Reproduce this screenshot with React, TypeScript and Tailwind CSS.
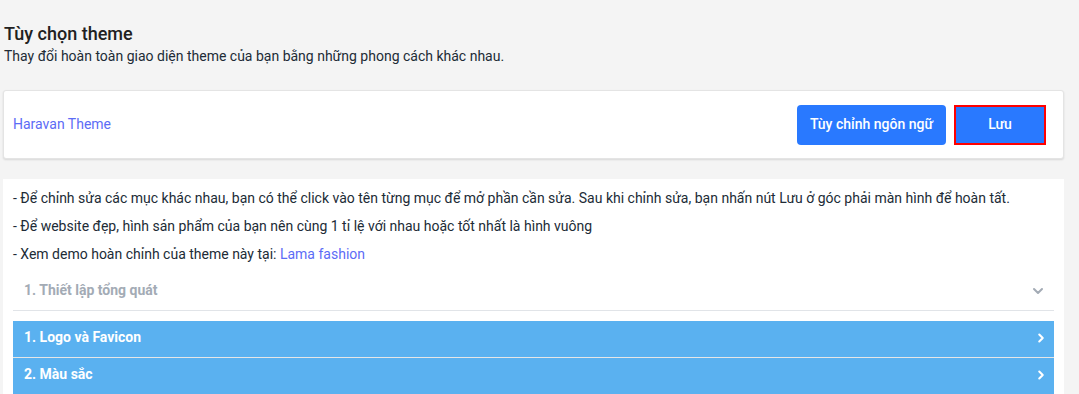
import { ChevronDown, ChevronRight } from "lucide-react";

const SECTIONS = ["1. Logo và Favicon", "2. Màu sắc"];

export default function App() {
  return (
    <div className="min-h-screen bg-[#f4f4f4] font-['Roboto',sans-serif] text-[#212b36] px-[3px] pt-[22px]">
      {/* Page heading */}
      <h1 className="pl-px text-[18px] leading-[24px] font-medium text-[#212121]">Tùy chọn theme</h1>
      <p className="pl-px text-[14px] leading-[20px] text-[#212b36]">
        Thay đổi hoàn toàn giao diện theme của bạn bằng những phong cách khác nhau.
      </p>

      {/* Theme card */}
      <div className="mt-6 w-[1061px] h-[69px] bg-white border border-[#e4e4e4] rounded-[3px] shadow-[0_1px_2px_rgba(0,0,0,0.12)] flex items-center justify-between pl-[9px] pr-[17px]">
        <a href="#" className="text-[14px] text-[#5c6cf6]">Haravan Theme</a>
        <div className="flex items-center gap-2">
          <button className="h-10 px-[13px] rounded-[4px] bg-[#2979ff] text-white text-[14px] font-medium">
            Tùy chỉnh ngôn ngữ
          </button>
          <button className="h-10 w-[92px] bg-[#2979ff] border-2 border-[#ff0000] text-white text-[14px] font-medium">
            Lưu
          </button>
        </div>
      </div>

      {/* Content */}
      <div className="mt-5 w-[1061px] bg-white pt-[9px] px-[10px]">
        <div className="text-[14px] leading-[20px] text-[#212b36] space-y-2">
          <p>- Để chỉnh sửa các mục khác nhau, bạn có thể click vào tên từng mục để mở phần cần sửa. Sau khi chỉnh sửa, bạn nhấn nút Lưu ở góc phải màn hình để hoàn tất.</p>
          <p>- Để website đẹp, hình sản phẩm của bạn nên cùng 1 tỉ lệ với nhau hoặc tốt nhất là hình vuông</p>
          <p>- Xem demo hoàn chỉnh của theme này tại: <a href="#" className="text-[#5c6cf6]">Lama fashion</a></p>
        </div>

        <div className="mt-[8px] h-[39px] border-b border-[#e1e4e8] flex items-center justify-between pl-[11px] pr-[8px] pb-px">
          <span className="text-[14px] font-bold text-[#a3abb5]">1. Thiết lập tổng quát</span>
          <ChevronDown className="w-4 h-4 text-[#a3abb5]" strokeWidth={3} />
        </div>

        <div className="mt-[10px]">
          {SECTIONS.map((s) => (
            <div key={s} className="h-[37px] bg-[#5ab1f0] border-b border-[#e6e6e6] flex items-center justify-between pl-[11px] pr-[6px] pb-[3px]">
              <span className="text-[14px] font-bold text-white">{s}</span>
              <ChevronRight className="w-3.5 h-3.5 text-white" strokeWidth={3.5} />
            </div>
          ))}
        </div>
      </div>
    </div>
  );
}
